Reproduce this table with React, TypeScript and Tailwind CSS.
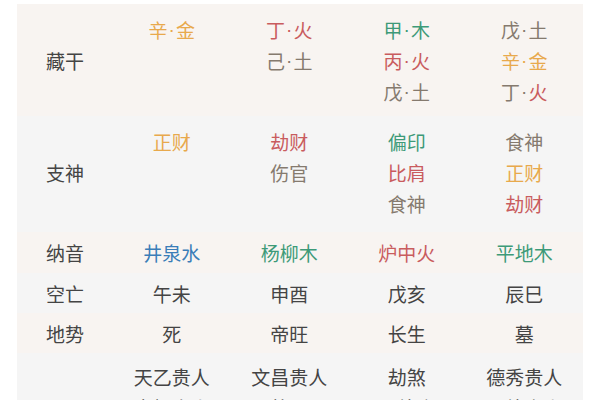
const gold = 'text-[#e8a94c]';
const red = 'text-[#c95c5e]';
const green = 'text-[#3d9a78]';
const earth = 'text-[#857a6e]';
const blue = 'text-[#3a7db8]';
const dark = 'text-[#444444]';

type Seg = { t: string; c: string };
type Cell = Seg[][];

const gz = (a: string, ac: string, b: string, bc: string): Seg[] => [
  { t: a, c: ac },
  { t: '·', c: ac },
  { t: b, c: bc },
];
const w = (t: string, c: string): Seg[] => [{ t, c }];

// tall rows hold stacked lines, short rows one line each
const rows: { label: string; bg: string; h: string; tall: boolean; cells: Cell[] }[] = [
  {
    label: '藏干',
    bg: 'bg-[#f8f4f1]',
    h: 'h-[112px]',
    tall: true,
    cells: [
      [gz('辛', gold, '金', gold)],
      [gz('丁', red, '火', red), gz('己', earth, '土', earth)],
      [gz('甲', green, '木', green), gz('丙', red, '火', red), gz('戊', earth, '土', earth)],
      [gz('戊', earth, '土', earth), gz('辛', gold, '金', gold), gz('丁', earth, '火', red)],
    ],
  },
  {
    label: '支神',
    bg: 'bg-[#f5f5f5]',
    h: 'h-[116px]',
    tall: true,
    cells: [
      [w('正财', gold)],
      [w('劫财', red), w('伤官', earth)],
      [w('偏印', green), w('比肩', red), w('食神', earth)],
      [w('食神', earth), w('正财', gold), w('劫财', red)],
    ],
  },
  {
    label: '纳音',
    bg: 'bg-[#f8f4f1]',
    h: 'h-[41px]',
    tall: false,
    cells: [[w('井泉水', blue)], [w('杨柳木', green)], [w('炉中火', red)], [w('平地木', green)]],
  },
  {
    label: '空亡',
    bg: 'bg-[#f5f5f5]',
    h: 'h-[40px]',
    tall: false,
    cells: [[w('午未', dark)], [w('申酉', dark)], [w('戊亥', dark)], [w('辰巳', dark)]],
  },
  {
    label: '地势',
    bg: 'bg-[#f8f4f1]',
    h: 'h-[40px]',
    tall: false,
    cells: [[w('死', dark)], [w('帝旺', dark)], [w('长生', dark)], [w('墓', dark)]],
  },
];

const lastRow: string[][] = [
  ['天乙贵人', '太极贵人'],
  ['文昌贵人', '将星'],
  ['劫煞', '天德合'],
  ['德秀贵人', '月德贵人'],
];

const Line = ({ line }: { line: Seg[] }) => (
  <div className="flex items-center">
    {line.map((s, k) =>
      s.t === '·' ? (
        <span key={k} className={`${s.c} px-[1px]`} style={{ fontFamily: '"Liberation Sans", sans-serif' }}>
          ·
        </span>
      ) : (
        <span key={k} className={s.c}>
          {s.t}
        </span>
      ),
    )}
  </div>
);

export default function App() {
  return (
    <div
      className="w-[600px] h-[400px] overflow-hidden bg-white pt-[4px] pl-[17px]"
      style={{ fontFamily: '"Noto Sans CJK SC", "Noto Sans", sans-serif' }}
    >
      <div className="w-[566px] text-[19px] leading-[31px]">
        {rows.map((row) => (
          <div key={row.label} className={`flex items-center ${row.bg} ${row.h}`}>
            <div className={`w-[96px] text-center text-[#444444] ${row.label === '支神' ? 'pb-[4px]' : ''}`}>
              {row.label}
            </div>
            {row.cells.map((cell, i) => (
              <div
                key={i}
                className={`w-[117.5px] flex flex-col items-center ${row.tall ? 'self-stretch pt-[10px]' : ''}`}
              >
                {cell.map((line, j) => (
                  <Line key={j} line={line} />
                ))}
              </div>
            ))}
          </div>
        ))}
        <div className="flex bg-[#f5f5f5] pt-[8px] pb-[8px]">
          <div className="w-[96px]" />
          {lastRow.map((lines, i) => (
            <div key={i} className="w-[117.5px] flex flex-col items-center text-[#444444]">
              {lines.map((t) => (
                <div key={t} className="h-[31px]">{t}</div>
              ))}
            </div>
          ))}
        </div>
      </div>
    </div>
  );
}
